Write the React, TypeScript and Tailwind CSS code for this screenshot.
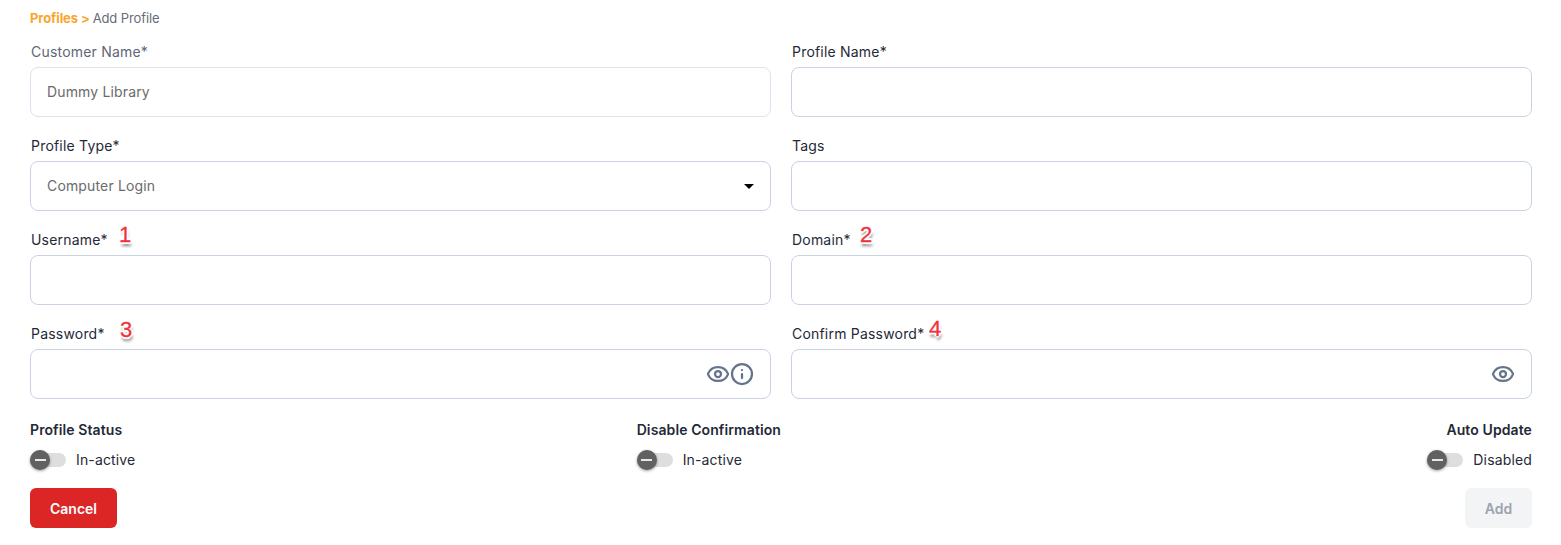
import { Eye, Info } from "lucide-react";

const font = { fontFamily: "Inter, 'Noto Sans', sans-serif" };

function Marker({ n, className }: { n: number; className: string }) {
  return (
    <span
      className={`absolute text-[22px] leading-none text-[#f0323c] [font-family:'Liberation_Sans',sans-serif] [-webkit-text-stroke:0.3px_#f0323c] [text-shadow:-2px_0_0_#fff,2px_0_0_#fff,0_-2px_0_#fff,0_2px_0_#fff,-1px_-1px_0_#fff,1px_-1px_0_#fff,-1px_1px_0_#fff,1px_1px_0_#fff,1px_4px_3px_rgba(0,0,0,0.55)] ${className}`}
    >
      {n}
    </span>
  );
}

function Field({
  label,
  muted,
  value,
  marker,
  markerClass,
  children,
}: {
  label: string;
  muted?: boolean;
  value?: string;
  marker?: number;
  markerClass?: string;
  children?: React.ReactNode;
}) {
  return (
    <div className="flex flex-col">
      <div className="relative h-[20px] pl-px">
        <label className={`block text-[14px] leading-[20px] tracking-[0.2px] ${muted ? "text-[#5f6675]" : "text-[#1f2937]"}`}>{label}</label>
        {marker && <Marker n={marker} className={markerClass || ""} />}
      </div>
      <div className={`mt-[5px] flex h-[50px] items-center justify-between rounded-lg border pl-4 pr-4 text-[14px] leading-[20px] tracking-[0.15px] text-[#6b6b6b] ${muted ? "border-[#dbe3ee]" : "border-[#c9d3e3]"}`}>
        <span>{value}</span>
        {children}
      </div>
    </div>
  );
}

function Toggle({ title, state, align }: { title: string; state: string; align?: string }) {
  return (
    <div className={`flex flex-col ${align || "items-start"}`}>
      <div className="text-[14px] font-semibold leading-[20px] tracking-[0.1px] text-[#1f2937]">{title}</div>
      <div className="mt-[10px] flex items-center gap-[10px]">
        <div className="relative h-[14px] w-[36px] rounded-full bg-[#dedede]">
          <div className="absolute -top-[3px] left-0 flex h-5 w-5 items-center justify-center rounded-full bg-[#616161] shadow-[0_1px_3px_rgba(0,0,0,0.4)]">
            <div className="h-[2px] w-[11px] bg-[#e8e8e8]" />
          </div>
        </div>
        <span className="text-[14px] leading-[20px] tracking-[0.15px] text-[#1f2937]">{state}</span>
      </div>
    </div>
  );
}

export default function App() {
  return (
    <div className="min-h-screen bg-white pl-[30px] pr-[29px] pt-[9px]" style={font}>
      <div className="flex h-[18px] items-center text-[13px] leading-[18px]">
        <span className="font-bold text-[#f9a52e] tracking-[-0.1px]">Profiles &gt;</span>
        <span className="ml-[3px] tracking-[-0.1px] text-[#666c78]">Add Profile</span>
      </div>

      <div className="mt-[15px] grid grid-cols-2 gap-x-5 gap-y-[19px]">
        <Field label="Customer Name*" muted value="Dummy Library" />
        <Field label="Profile Name*" />
        <Field label="Profile Type*" value="Computer Login">
          <span className="h-0 w-0 border-x-[5px] border-t-[5px] border-x-transparent border-t-black" />
        </Field>
        <Field label="Tags" />
        <Field label="Username*" marker={1} markerClass="left-[89px] -top-[6px]" />
        <Field label="Domain*" marker={2} markerClass="left-[69px] -top-[6px]" />
        <Field label="Password*" marker={3} markerClass="left-[90px] -top-[5px]">
          <div className="flex items-center text-[#64748b]">
            <Eye size={24} strokeWidth={2.25} />
            <Info size={24} strokeWidth={2.25} />
          </div>
        </Field>
        <Field label="Confirm Password*" marker={4} markerClass="left-[138px] -top-[6px]">
          <Eye size={24} strokeWidth={2.25} className="text-[#64748b]" />
        </Field>
      </div>

      <div className="mt-[21px] grid grid-cols-2">
        <div className="flex items-start justify-between">
          <Toggle title="Profile Status" state="In-active" />
          <Toggle title="Disable Confirmation" state="In-active" />
        </div>
        <div className="flex justify-end">
          <Toggle title="Auto Update" state="Disabled" align="items-end" />
        </div>
      </div>

      <div className="mt-[18px] flex items-center justify-between">
        <button className="h-10 w-[87px] rounded-md bg-[#dc2626] text-[14px] font-semibold text-white">Cancel</button>
        <button className="h-10 w-[67px] rounded-md bg-[#f3f4f6] text-[14px] font-semibold text-[#9ca3af]">Add</button>
      </div>
    </div>
  );
}
